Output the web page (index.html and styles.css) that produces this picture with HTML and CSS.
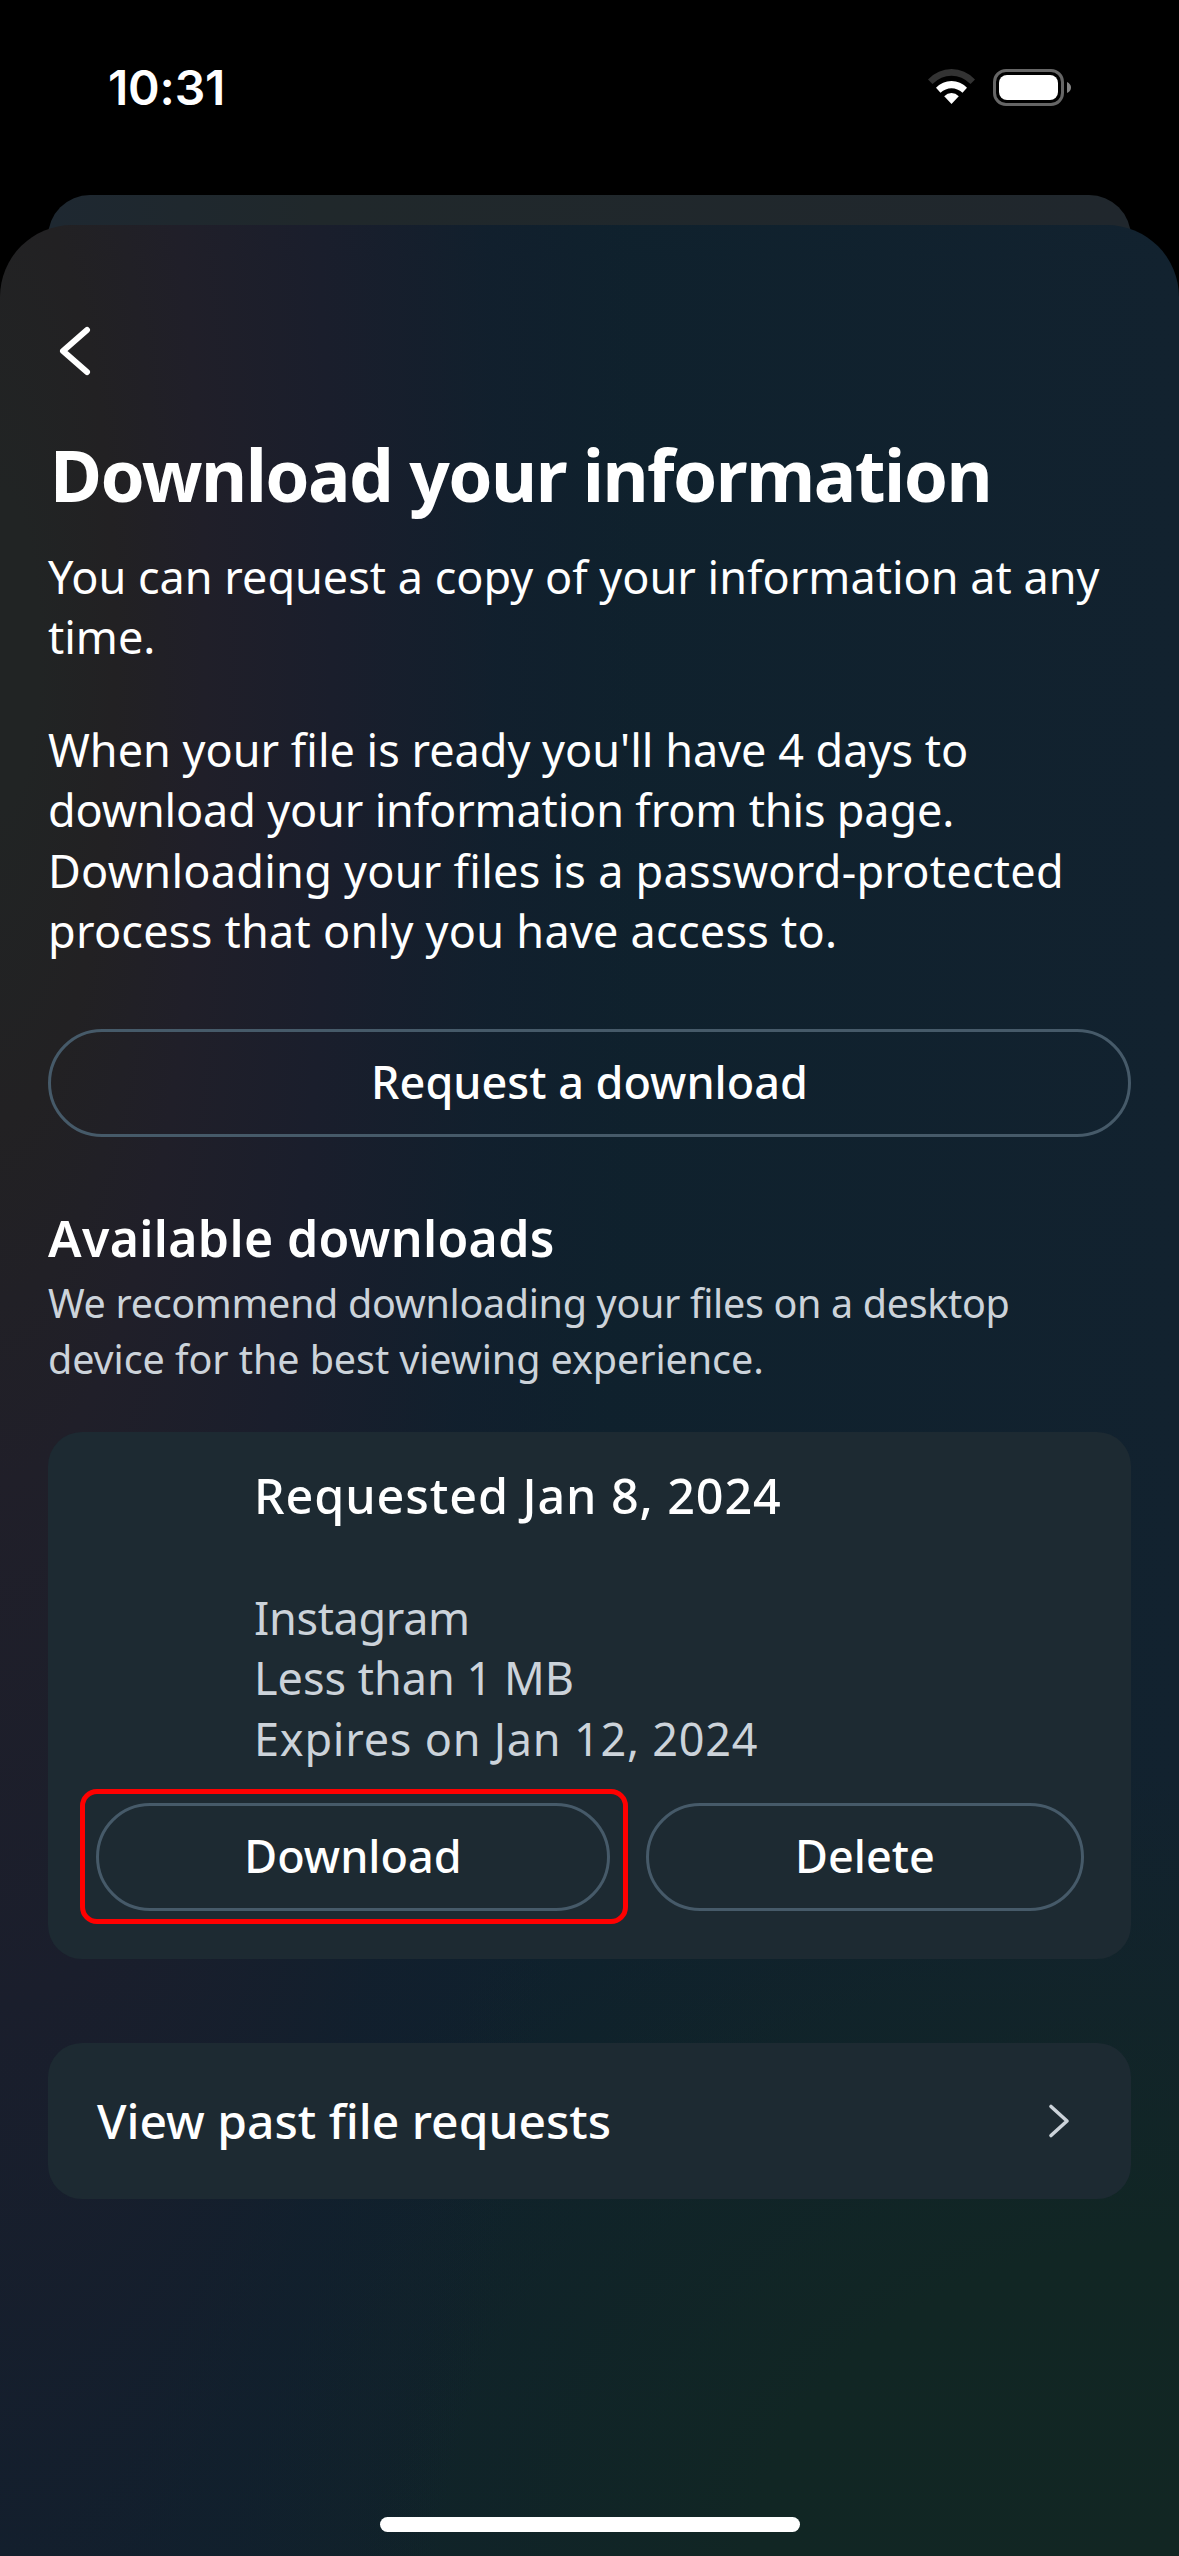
FILE: index.html
```html
<!DOCTYPE html>
<html lang="en">
<head>
<meta charset="utf-8">
<title>Download your information</title>
<link rel="stylesheet" href="styles.css">
</head>
<body>
<div class="screen">
  <header class="status-bar">
    <span class="time">10:31</span>
    <div class="status-icons">
      <svg class="wifi" width="47" height="36" viewBox="0 0 47 36">
        <path d="M0 10.500Q10 0 23.500 0T47 10.500L42.500 15Q34 6.800 23.500 6.800T4.500 15Z" fill="#333"/>
        <path d="M8 18.800Q14.500 12 23.500 12T39 18.800L34.500 23.800Q29.500 19.200 23.500 19.200T12.500 23.800Z" fill="#fff"/>
        <path d="M16.200 27.200Q19.500 24 23.500 24T30.800 27.200L23.500 35Z" fill="#fff"/>
      </svg>
      <svg class="battery" width="79" height="37" viewBox="0 0 79 37">
        <rect x="1.500" y="1.500" width="68" height="34" rx="11.500" fill="none" stroke="#666" stroke-width="3"/>
        <rect x="6" y="6" width="59" height="25" rx="8" fill="#fff"/>
        <path d="M74 13Q78 15 78 18.500T74 24Z" fill="#858585"/>
      </svg>
    </div>
  </header>
  <div class="sheet-behind"></div>
  <main class="sheet">
    <svg class="back" width="34" height="52" viewBox="0 0 34 52">
      <path d="M28 5 4 26 28 47" fill="none" stroke="#fff" stroke-width="6" stroke-linecap="round" stroke-linejoin="round"/>
    </svg>
    <h1 class="title">Download your information</h1>
    <p class="body">You can request a copy of your information at any<br>time.</p>
    <p class="body">When your file is ready you'll have 4 days to<br><span class="snug">download your information from this page.</span><br><span class="loose">Downloading your files is a password-protected</span><br><span class="loose">process that only you have access to.</span></p>
    <div class="button request">Request a download</div>
    <h2 class="section-title">Available downloads</h2>
    <p class="hint"><span class="tight">We recommend downloading your files on a desktop</span><br>device for the best viewing experience.</p>
    <section class="card">
      <h3 class="card-title">Requested Jan 8, 2024</h3>
      <p class="details"><span class="tight">Instagram</span><br>Less than 1 MB<br><span class="wide">Expires on Jan 12, 2024</span></p>
      <div class="actions">
        <div class="button download">Download</div>
        <div class="button delete">Delete</div>
      </div>
    </section>
    <div class="link-row">
      <span class="link-label">View past file requests</span>
      <svg width="26" height="38" viewBox="0 0 26 38"><path d="M4 4.500 20 19 4 33.500" fill="none" stroke="#ccd3da" stroke-width="3.600" stroke-linecap="round" stroke-linejoin="round"/></svg>
    </div>
    <div class="home-indicator"></div>
  </main>
</div>
</body>
</html>
```
FILE: styles.css
```css
* { box-sizing: border-box; }
body { margin: 0; background: #000; color: #fff; font-family: "Noto Sans", sans-serif; }
h1, h2, h3, p { margin: 0; }
.screen { width: 1179px; height: 2556px; display: flex; flex-direction: column; overflow: hidden; background: #000; }

.status-bar { height: 195px; padding: 59px 107px 0 108px; display: flex; justify-content: space-between; align-items: flex-start; flex: none; }
.time { font: 600 48px/58px Inter, sans-serif; letter-spacing: -0.200px; }
.status-icons { display: flex; gap: 18px; padding-top: 10px; }

.sheet-behind { height: 60px; margin: 0 48px -30px; flex: none; border-radius: 42px 42px 0 0; background: linear-gradient(90deg, #1e2831, #20282b 25%, #20272d); }
.sheet {
  flex: 1;
  display: flex;
  flex-direction: column;
  padding: 100px 48px 24px;
  border-radius: 72px 72px 0 0;
  background:
    radial-gradient(ellipse 640px 2600px at 0 425px, #212424 0%, #212424 6%, #222123 18%, #201f29 32%, #1a1e2c 52%, rgba(18, 31, 45, 0.700) 78%, rgba(16, 33, 45, 0) 100%),
    radial-gradient(ellipse 1050px 780px at 100% 100%, #122623 0%, #112624 40%, rgba(16, 33, 45, 0) 100%),
    linear-gradient(90deg, #101f2e, #0f212d 50%, #12222f);
}
.back { margin-left: 11px; flex: none; }
.title { margin: 53px 0 0 2px; font-size: 71px; line-height: 90px; font-weight: 700; letter-spacing: -1.550px; white-space: nowrap; }
.body { font-size: 45px; line-height: 60.400px; margin-top: 27px; white-space: nowrap; }
.body + .body { margin-top: 52px; }
.snug { letter-spacing: -0.160px; }
.loose { letter-spacing: 0.260px; }
.tight { letter-spacing: -0.330px; }
.wide { letter-spacing: 0.780px; }
.button { position: relative; height: 108px; padding-bottom: 3px; border: 3px solid #465a69; border-radius: 54px; display: flex; align-items: center; justify-content: center; font-size: 45px; font-weight: 500; flex: none; }
.request { margin-top: 67.600px; }
.section-title { margin-top: 71px; font-size: 50px; line-height: 60px; font-weight: 600; letter-spacing: 0.350px; }
.hint { margin-top: 7px; font-size: 39.500px; line-height: 56px; letter-spacing: -0.080px; color: #ccd3da; }
.card { margin-top: 45px; height: 527px; border-radius: 34px; background: #1d2a32; flex: none; }
.card-title { padding: 33px 0 0 206px; font-size: 48.500px; line-height: 60px; font-weight: 500; letter-spacing: 0.900px; }
.details { padding: 63px 0 0 206px; font-size: 45px; line-height: 60.300px; color: #ccd3da; }
.actions { display: flex; gap: 36px; padding: 34px 47px 0 48px; }
.download { width: 514px; }
.download::after { content: ""; position: absolute; inset: -17px -21px -16px -19px; border: 5px solid #f00; border-radius: 17px; }
.delete { flex: 1; }
.link-row { margin-top: 84px; height: 156px; padding: 0 58px 0 49px; border-radius: 34px; background: #1d2a32; display: flex; align-items: center; justify-content: space-between; flex: none; }
.link-label { padding-bottom: 2px; font-size: 48px; font-weight: 500; }
.home-indicator { width: 420px; height: 15px; margin: auto auto 0; border-radius: 8px; background: #fff; }
```
